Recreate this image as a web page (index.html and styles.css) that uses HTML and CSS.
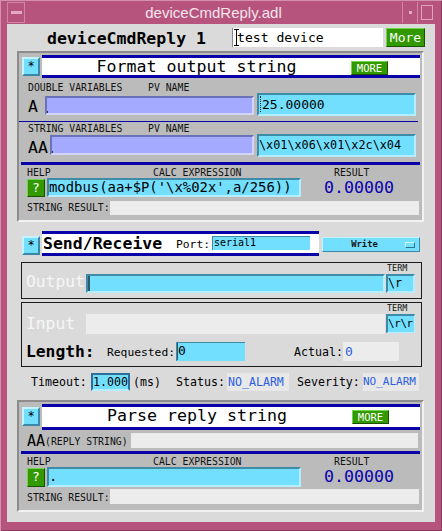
FILE: index.html
```html
<!DOCTYPE html>
<html>
<head>
<meta charset="utf-8">
<title>deviceCmdReply.adl</title>
<link rel="stylesheet" href="styles.css">
</head>
<body>
<div class="window">
  <div class="titlebar">
    <div class="tb-min"><span class="dash"></span></div>
    <div class="tb-title">deviceCmdReply.adl</div>
    <div class="tb-dot"><span></span></div>
    <div class="tb-max"><span></span></div>
  </div>
  <div class="content">
    <div class="toprow">
      <div class="devlabel">deviceCmdReply 1</div>
      <div class="devfield"><span class="ibeam"></span>test device</div>
      <div class="morebtn gbtn">More</div>
    </div>

    <section class="panel fmt">
      <div class="phead">
        <div class="star">*</div>
        <div class="band">
          <div class="btitle">Format output string</div>
          <div class="mini-more gbtn">MORE</div>
        </div>
      </div>
      <div class="lbl l1"><span class="c-var">DOUBLE VARIABLES</span><span>PV NAME</span></div>
      <div class="vrow">
        <div class="vname w-a">A</div>
        <div class="fld lav lav1"><span class="dot"></span></div>
        <div class="fld cyan val"><span class="caret"></span>25.00000</div>
      </div>
      <div class="thin"></div>
      <div class="lbl l2"><span class="c-var">STRING VARIABLES</span><span>PV NAME</span></div>
      <div class="vrow">
        <div class="vname w-aa">AA</div>
        <div class="fld lav lav2"><span class="dot"></span></div>
        <div class="fld cyan val sval">\x01\x06\x01\x2c\x04</div>
      </div>
      <div class="thick"></div>
      <div class="lbl l3"><span class="c-help">HELP</span><span class="c-calc">CALC EXPRESSION</span><span>RESULT</span></div>
      <div class="crow">
        <div class="qbtn gbtn">?</div>
        <div class="fld cyan calc">modbus(aa+$P('\x%02x',a/256))</div>
        <div class="result">0.00000</div>
      </div>
      <div class="srow">
        <div class="slabel">STRING RESULT:</div>
        <div class="sfield"></div>
      </div>
    </section>

    <div class="sr">
      <div class="star">*</div>
      <div class="srband">
        <div class="srtitle">Send/Receive</div>
        <div class="port">Port:</div>
        <div class="fld cyan portfld">serial1</div>
      </div>
      <div class="menu">
        <div class="menutext">Write</div>
        <div class="menuicon"></div>
      </div>
    </div>

    <div class="iobox outbox">
      <div class="iolabel">Output</div>
      <div class="fld cyan iofld"><span class="caret c2"></span></div>
      <div class="term">
        <div class="termlbl">TERM</div>
        <div class="fld cyan termfld">\r</div>
      </div>
    </div>

    <div class="iobox inbox">
      <div class="inrow">
        <div class="iolabel inlabel">Input</div>
        <div class="iofld light"></div>
        <div class="term">
          <div class="termlbl">TERM</div>
          <div class="fld cyan termfld tf2">\r\r</div>
        </div>
      </div>
      <div class="lenrow">
        <div class="lenlabel">Length:</div>
        <div class="req">Requested:</div>
        <div class="fld cyan reqfld"><span class="caret c3"></span>0</div>
        <div class="act">Actual:</div>
        <div class="actfld">0</div>
      </div>
    </div>

    <div class="torow">
      <div class="tlabel">Timeout:</div>
      <div class="fld cyan tofld">1.000</div>
      <div class="ms">(ms)</div>
      <div class="stlabel">Status:</div>
      <div class="alarm a1">NO_ALARM</div>
      <div class="svlabel">Severity:</div>
      <div class="alarm a2">NO_ALARM</div>
    </div>

    <section class="panel parse">
      <div class="phead ph2">
        <div class="star">*</div>
        <div class="band band2">
          <div class="btitle bt2">Parse reply string</div>
          <div class="mini-more gbtn">MORE</div>
        </div>
      </div>
      <div class="aarow">
        <div class="aaname">AA</div>
        <div class="aalbl">(REPLY STRING)</div>
        <div class="aafld"></div>
      </div>
      <div class="thick t2"></div>
      <div class="lbl l3"><span class="c-help">HELP</span><span class="c-calc">CALC EXPRESSION</span><span>RESULT</span></div>
      <div class="crow cr2">
        <div class="qbtn gbtn">?</div>
        <div class="fld cyan calc">.</div>
        <div class="result">0.00000</div>
      </div>
      <div class="srow sr2">
        <div class="slabel">STRING RESULT:</div>
        <div class="sfield"></div>
      </div>
    </section>
  </div>
</div>
</body>
</html>
```

FILE: styles.css
```css
* { box-sizing: border-box; }
body { margin: 0; background: #b6547e; font-family: "DejaVu Sans Mono", monospace; color: #000; }

.window {
  width: 442px; height: 531px; background: #b6547e; overflow: hidden; padding-top: 2px;
  box-shadow: inset 1px 1px 0 #d690af, inset -1px -1px 0 #8a3a5c;
}
.titlebar { display: flex; height: 21px; margin: 0 7px; }
.tb-min { width: 18px; border: 1px solid #cf86a6; display: flex; align-items: center; justify-content: center; }
.tb-min .dash { width: 11px; height: 3px; background: #e2a9c1; }
.tb-title { flex: 1; text-align: center; font: 15px/21px "Liberation Sans", Arial, sans-serif; color: #f4e4ec; }
.tb-dot { width: 15px; border-left: 1px solid #cf86a6; display: flex; align-items: center; justify-content: center; }
.tb-dot span { width: 3px; height: 3px; background: #e2a9c1; }
.tb-max { width: 18px; border-left: 1px solid #cf86a6; display: flex; align-items: center; justify-content: center; }
.tb-max span { width: 12px; height: 15px; border: 1px solid #dea2bc; }

.content { margin: 1px 0 0 7px; width: 428px; height: 498px; background: #dadada; overflow: hidden; }

/* top row */
.toprow { display: flex; height: 27px; }
.devlabel { margin-left: 40px; width: 185px; padding-top: 5px; font: bold 16.5px/20px "DejaVu Sans Mono", monospace; }
.devfield {
  margin-top: 4px; width: 151px; height: 19px; background: #fff; border-left: 1px solid #8a8a8a;
  font: 13.1px/18px "DejaVu Sans Mono", monospace; padding-left: 1px; display: flex; align-items: center; white-space: pre;
}
.ibeam {
  display: inline-block; width: 5px; height: 17px; margin-right: -2px;
  border-top: 1px solid #000; border-bottom: 1px solid #000;
  background: linear-gradient(#000, #000) center / 1px 100% no-repeat;
}
.gbtn { background: #339900; border: 1px solid; border-color: #72d44c #1b5200 #1b5200 #72d44c; color: #fff; text-align: center; }
.morebtn { margin-left: 3px; margin-top: 4px; width: 39px; height: 19px; font: 13px/17px "DejaVu Sans Mono", monospace; }

/* panels */
.panel {
  margin-left: 10px; width: 407px; background: #bbbbbb;
  border: 2px solid; border-color: #8c8c8c #f2f2f2 #f2f2f2 #8c8c8c;
}
.fmt { height: 171px; }
.parse { margin-top: 9px; height: 112px; }

.phead { display: flex; height: 25px; padding-left: 1px; }
.ph2 { height: 28px; }
.star {
  width: 18px; height: 19px; margin-left: 2px; margin-top: 4px; background: #73dfff;
  border: 2px solid; border-color: #c4f3ff #3b88a8 #3b88a8 #c4f3ff;
  font: 12px/15px "DejaVu Sans Mono", monospace; text-align: center;
}
.ph2 .star { margin-top: 5px; }
.band {
  margin-left: 2px; margin-top: 2px; width: 378px; height: 23px; background: #fff;
  border-top: 3px solid #0a00a8; border-bottom: 3px solid #0a00a8; display: flex;
}
.band2 { height: 26px; }
.btitle { width: 309px; text-align: center; font: 16.6px/17px "DejaVu Sans Mono", monospace; white-space: pre; }
.bt2 { width: 310px; line-height: 18px; }
.mini-more { width: 37px; height: 14px; margin-top: 3px; font: 10.5px/12px "DejaVu Sans Mono", monospace; }

.lbl { display: flex; padding-left: 9px; font: 9.8px/11px "DejaVu Sans Mono", monospace; color: #111; white-space: pre; }
.l1 { height: 15px; padding-top: 4px; }
.l2 { height: 12px; padding-top: 2px; line-height: 10px; }
.l3 { height: 13px; padding-top: 2px; padding-left: 8px; }
.c-var { width: 120px; }
.c-help { width: 126px; }
.c-calc { width: 181px; }

.vrow { display: flex; height: 23px; padding-left: 9px; }
.vname { font: 16.5px/19px "DejaVu Sans Mono", monospace; padding-top: 4px; }
.w-a { width: 17px; }
.w-aa { width: 22px; }
.fld { border: 2px solid; overflow: hidden; white-space: pre; }
.cyan { background: #73dfff; border-color: #3f8aa6 #b6eeff #b6eeff #3f8aa6; }
.lav { background: #a4aaff; border-color: #6b72b8 #d2d5ff #d2d5ff #6b72b8; margin-top: 3px; height: 19px; position: relative; }
.lav1 { width: 209px; }
.lav2 { width: 204px; margin-top: 1px; height: 20px; }
.dot { position: absolute; left: 0; bottom: 0; width: 1px; height: 2px; background: #333; }
.val { margin-left: 3px; width: 159px; height: 23px; font: 13px/19px "DejaVu Sans Mono", monospace; padding-left: 1px; display: flex; }
.sval { font-size: 11.8px; padding-left: 0; }
.caret { display: inline-block; width: 2px; height: 16px; margin-top: 1px; border-left: 1px dotted #222; }

.thin { margin-top: 5px; height: 1px; background: #0a00a8; margin-right: 4px; }
.thick { margin: 5px 2px 0 2px; height: 3px; background: #0a00a8; }
.t2 { margin-top: 3px; }

.crow { display: flex; height: 19px; padding-left: 8px; }
.cr2 { height: 20px; }
.qbtn { width: 18px; height: 18px; margin-top: 1px; font: 13px/16px "DejaVu Sans Mono", monospace; }
.cr2 .qbtn { height: 19px; }
.calc { margin-left: 2px; width: 254px; font: 13.9px/15px "DejaVu Sans Mono", monospace; padding-left: 0; }
.result { margin-left: 23px; font: 16.6px/19px "DejaVu Sans Mono", monospace; color: #0a00b0; }
.cr2 .result { line-height: 20px; }

.srow { display: flex; height: 14px; margin-top: 4px; padding-left: 8px; }
.sr2 { height: 15px; margin-top: 2px; }
.slabel { width: 83px; font: 9.8px/14px "DejaVu Sans Mono", monospace; color: #111; white-space: pre; }
.sr2 .slabel { line-height: 15px; padding-top: 1px; }
.sfield { width: 309px; background: #ececec; }

/* send/receive */
.sr { display: flex; margin-top: 9px; height: 25px; padding-left: 13px; }
.sr .star { margin-top: 5px; }
.srband {
  margin-left: 2px; width: 277px; height: 25px; background: #fff; display: flex;
  border-top: 3px solid #0a00a8; border-bottom: 3px solid #0a00a8;
}
.srtitle { margin-left: 1px; width: 133px; font: bold 16.5px/19px "DejaVu Sans Mono", monospace; }
.port { width: 36px; font: 11.3px/19px "DejaVu Sans Mono", monospace; padding-top: 1px; }
.portfld { margin-top: 2px; width: 98px; height: 14px; font: 10px/11px "DejaVu Sans Mono", monospace; border-width: 1px 0 0 1px; padding-left: 1px; }
.menu {
  margin-left: 3px; margin-top: 6px; width: 98px; height: 15px; background: #73dfff; display: flex; align-items: center;
  border: 1px solid; border-color: #c4f3ff #3b88a8 #3b88a8 #c4f3ff;
}
.menutext { flex: 1; text-align: center; font: bold 8.8px/13px "DejaVu Sans Mono", monospace; color: #111; padding-left: 1px; }
.menuicon { width: 10px; height: 6px; margin-right: 4px; background: #73dfff; border: 1px solid; border-color: #d4f6ff #2e7391 #2e7391 #d4f6ff; }

/* io boxes */
.iobox { margin-left: 14px; width: 401px; border: 1px solid #1c1c1c; }
.outbox { margin-top: 6px; height: 37px; display: flex; padding-left: 4px; }
.inbox { margin-top: 3px; height: 65px; padding-left: 4px; }
.iolabel { width: 60px; margin-top: 9px; font: 16.3px/19px "DejaVu Sans Mono", monospace; color: #f6f6f6; }
.iofld { margin-top: 11px; width: 299px; height: 19px; }
.iofld.light { background: #ececec; height: 20px; }
.c2 { margin-top: 0; height: 15px; border-left: 2px solid #2a5a70; }
.term { margin-left: 1px; width: 29px; }
.termlbl { height: 11px; font: 8.5px/11px "DejaVu Sans Mono", monospace; padding-left: 1px; color: #111; }
.termfld { width: 29px; height: 19px; font: 11.6px/15px "DejaVu Sans Mono", monospace; padding-left: 0; }
.tf2 { font-size: 10.8px; border-width: 2px 1px 1px 2px; letter-spacing: -0.3px; }
.inrow { display: flex; height: 31px; }
.inlabel { margin-top: 11px; line-height: 20px; }
.lenrow { display: flex; margin-top: 8px; height: 19px; }
.lenlabel { width: 81px; font: bold 16.3px/19px "DejaVu Sans Mono", monospace; }
.req { width: 69px; font: 11.3px/19px "DejaVu Sans Mono", monospace; padding-top: 1px; }
.reqfld { width: 69px; height: 19px; font: 13px/15px "DejaVu Sans Mono", monospace; display: flex; border-width: 1px 0 0 1px; }
.c3 { margin-top: 0; height: 17px; border-left: 1px solid #2a5a70; width: 1px; }
.act { margin-left: 49px; width: 49px; font: 11.6px/19px "DejaVu Sans Mono", monospace; padding-top: 1px; }
.actfld { width: 56px; height: 19px; background: #ececec; font: 13px/19px "DejaVu Sans Mono", monospace; color: #2a5ee0; padding-left: 2px; }

/* timeout row */
.torow { display: flex; margin-top: 6px; height: 18px; padding-left: 24px; font: 11.6px/18px "DejaVu Sans Mono", monospace; white-space: pre; }
.tlabel { width: 60px; }
.tofld { width: 39px; height: 18px; line-height: 14px; border-width: 2px; border-color: #2e6f9a #2e6f9a #b6eeff #2e6f9a; padding-left: 0; }
.ms { margin-left: 3px; width: 43px; }
.stlabel { width: 51px; }
.alarm { background: #e8e8e8; color: #2a5ee0; overflow: hidden; padding-left: 1px; }
.a1 { width: 62px; }
.svlabel { margin-left: 8px; width: 66px; }
.a2 { width: 56px; font-size: 11px; padding-left: 0; }

/* parse */
.aarow { display: flex; margin-top: 3px; height: 15px; padding-left: 8px; }
.aaname { width: 18px; font: 15px/15px "DejaVu Sans Mono", monospace; padding-top: 1px; }
.aalbl { width: 86px; font: 9.8px/15px "DejaVu Sans Mono", monospace; color: #111; padding-top: 1px; white-space: pre; }
.aafld { width: 287px; background: #ececec; }
```
